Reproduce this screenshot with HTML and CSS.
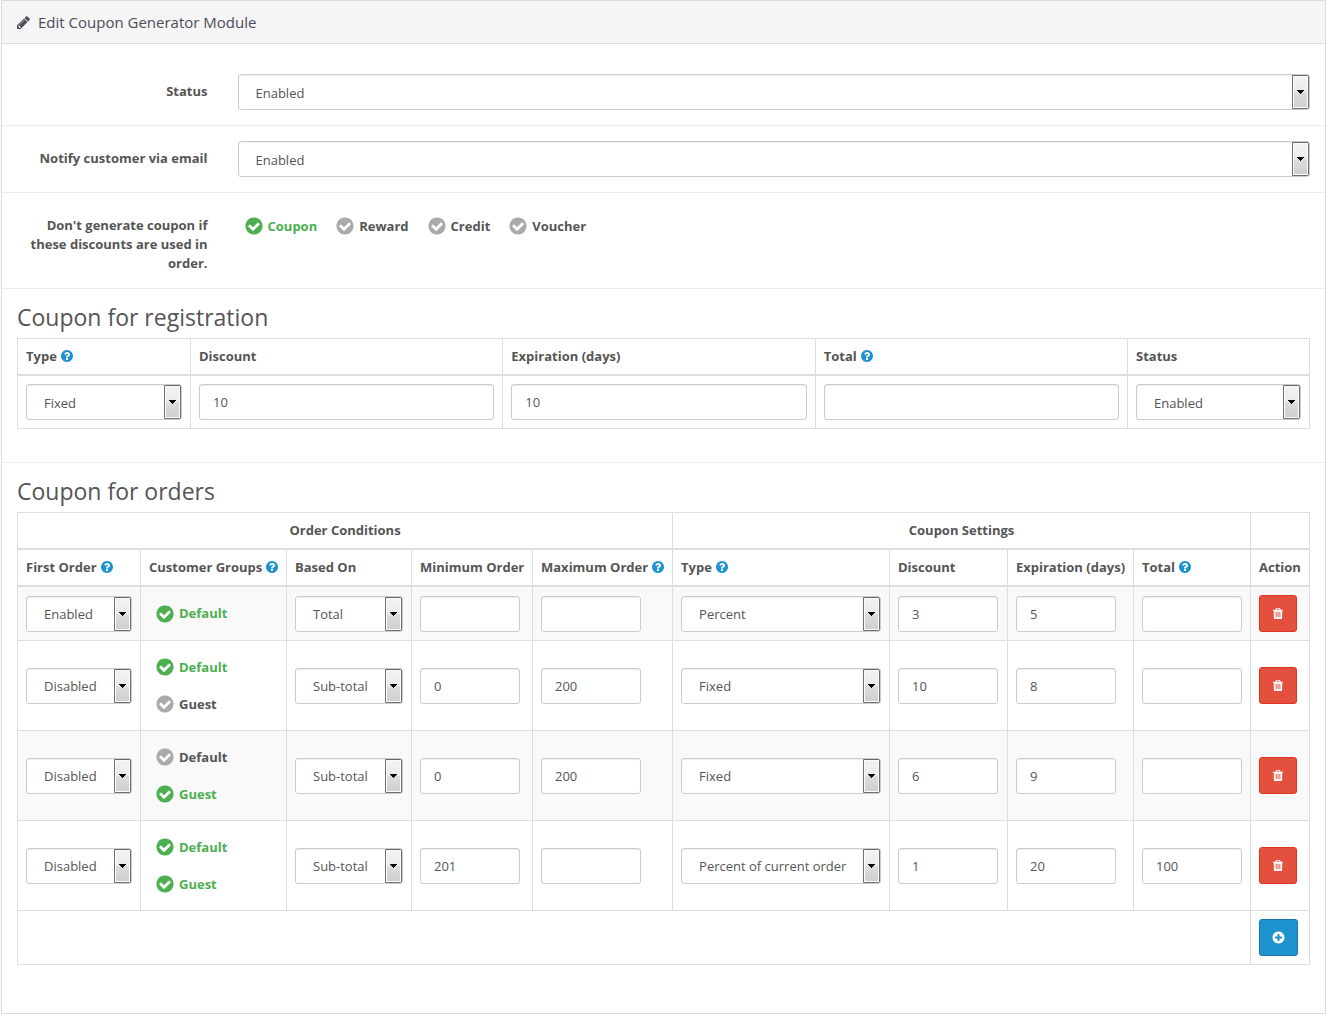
FILE: index.html
```html
<!DOCTYPE html>
<html lang="en">
<head>
<meta charset="utf-8">
<meta name="viewport" content="width=device-width, initial-scale=1">
<title>Edit Coupon Generator Module</title>
<link rel="stylesheet" href="styles.css">
</head>
<body>
<svg class="sprite" aria-hidden="true">
  <symbol id="i-pencil" viewBox="128 128 1536 1536"><path d="M491 1536l91-91-235-235-91 91v107h128v128h107zm523-928q0-22-22-22-10 0-17 7l-542 542q-7 7-7 17 0 22 22 22 10 0 17-7l542-542q7-7 7-17zm-54-192l416 416-832 832h-416v-416zm683 96q0 53-37 90l-166 166-416-416 166-165q36-38 90-38 53 0 91 38l235 234q37 39 37 91z"/></symbol>
  <symbol id="i-help" viewBox="128 128 1536 1536"><path d="M1024 1376v-192q0-14-9-23t-23-9h-192q-14 0-23 9t-9 23v192q0 14 9 23t23 9h192q14 0 23-9t9-23zm256-672q0-88-55.5-163t-138.5-116-170-41q-243 0-371 213-15 24 8 42l132 100q7 6 19 6 16 0 25-12 53-68 86-92 34-24 86-24 48 0 85.5 26t37.5 59q0 38-20 61t-68 45q-63 28-115.5 86.5t-52.5 125.5v36q0 14 9 23t23 9h192q14 0 23-9t9-23q0-19 21.5-49.5t54.5-49.5q32-18 49-28.5t46-35 44.5-48 28-60.5 12.5-81zm384 192q0 209-103 385.5t-279.5 279.5-385.5 103-385.5-103-279.5-279.5-103-385.5 103-385.5 279.5-279.5 385.5-103 385.5 103 279.5 279.5 103 385.5z"/></symbol>
  <symbol id="i-plus" viewBox="70 70 1652 1652"><path d="M1344 960v-128q0-26-19-45t-45-19h-256v-256q0-26-19-45t-45-19h-128q-26 0-45 19t-19 45v256h-256q-26 0-45 19t-19 45v128q0 26 19 45t45 19h256v256q0 26 19 45t45 19h128q26 0 45-19t19-45v-256h256q26 0 45-19t19-45zm320-64q0 209-103 385.5t-279.5 279.5-385.5 103-385.5-103-279.5-279.5-103-385.5 103-385.5 279.5-279.5 385.5-103 385.5 103 279.5 279.5 103 385.5z"/></symbol>
  <symbol id="i-trash" viewBox="69 0 1654 1792"><path d="M704 1376v-704q0-14-9-23t-23-9h-64q-14 0-23 9t-9 23v704q0 14 9 23t23 9h64q14 0 23-9t9-23zm256 0v-704q0-14-9-23t-23-9h-64q-14 0-23 9t-9 23v704q0 14 9 23t23 9h64q14 0 23-9t9-23zm256 0v-704q0-14-9-23t-23-9h-64q-14 0-23 9t-9 23v704q0 14 9 23t23 9h64q14 0 23-9t9-23zm-544-992h448l-48-117q-7-9-17-11h-317q-10 2-17 11zm928 32v64q0 14-9 23t-23 9h-96v948q0 83-47 143.5t-113 60.5h-832q-66 0-113-58.5t-47-141.5v-952h-96q-14 0-23-9t-9-23v-64q0-14 9-23t23-9h309l70-167q15-37 54-63t79-26h320q40 0 79 26t54 63l70 167h309q14 0 23 9t9 23z"/></symbol>
</svg>

<main class="panel">
  <header class="panel-heading">
    <svg class="icon-pencil" aria-hidden="true"><use href="#i-pencil"/></svg>
    <h1 class="panel-title">Edit Coupon Generator Module</h1>
  </header>
  <form class="panel-body">
    <div class="form-group">
      <label class="control-label" for="status">Status</label>
      <div class="field"><select class="control select" id="status"><option>Enabled</option><option>Disabled</option></select></div>
    </div>
    <div class="form-group">
      <label class="control-label" for="notify">Notify customer via email</label>
      <div class="field"><select class="control select" id="notify"><option>Enabled</option><option>Disabled</option></select></div>
    </div>
    <div class="form-group" role="group" aria-labelledby="skip-label">
      <span class="control-label" id="skip-label">Don't generate coupon if these discounts are used in order.</span>
      <div class="field checks">
        <label class="check"><input type="checkbox" checked>Coupon</label>
        <label class="check"><input type="checkbox">Reward</label>
        <label class="check"><input type="checkbox">Credit</label>
        <label class="check"><input type="checkbox">Voucher</label>
      </div>
    </div>

    <section class="section">
      <h2 class="section-title">Coupon for registration</h2>
      <table class="table">
        <colgroup><col class="w-reg-type"><col><col><col><col class="w-reg-status"></colgroup>
        <thead>
          <tr>
            <th><label for="reg-type">Type</label><svg class="help" aria-hidden="true"><use href="#i-help"/></svg></th>
            <th><label for="reg-discount">Discount</label></th>
            <th><label for="reg-days">Expiration (days)</label></th>
            <th><label for="reg-total">Total</label><svg class="help" aria-hidden="true"><use href="#i-help"/></svg></th>
            <th><label for="reg-status">Status</label></th>
          </tr>
        </thead>
        <tbody>
          <tr class="plain">
            <td><select class="control select" id="reg-type"><option>Fixed</option><option>Percent</option></select></td>
            <td><input class="control" type="text" id="reg-discount" value="10"></td>
            <td><input class="control" type="text" id="reg-days" value="10"></td>
            <td><input class="control" type="text" id="reg-total"></td>
            <td><select class="control select" id="reg-status"><option>Enabled</option><option>Disabled</option></select></td>
          </tr>
        </tbody>
      </table>
    </section>

    <section class="section">
      <h2 class="section-title">Coupon for orders</h2>
      <table class="table">
        <colgroup><col class="w-first"><col class="w-groups"><col class="w-based"><col class="w-min"><col class="w-max"><col><col class="w-discount"><col class="w-days"><col class="w-total"><col class="w-action"></colgroup>
        <thead>
          <tr>
            <th class="center" colspan="5" scope="colgroup">Order Conditions</th>
            <th class="center" colspan="4" scope="colgroup">Coupon Settings</th>
            <td></td>
          </tr>
          <tr>
            <th scope="col">First Order<svg class="help" aria-hidden="true"><use href="#i-help"/></svg></th>
            <th scope="col">Customer Groups<svg class="help" aria-hidden="true"><use href="#i-help"/></svg></th>
            <th scope="col">Based On</th>
            <th scope="col">Minimum Order</th>
            <th scope="col">Maximum Order<svg class="help" aria-hidden="true"><use href="#i-help"/></svg></th>
            <th scope="col">Type<svg class="help" aria-hidden="true"><use href="#i-help"/></svg></th>
            <th scope="col">Discount</th>
            <th scope="col">Expiration (days)</th>
            <th scope="col">Total<svg class="help" aria-hidden="true"><use href="#i-help"/></svg></th>
            <th scope="col">Action</th>
          </tr>
        </thead>
        <tbody>
          <tr>
            <td><select class="control select" aria-label="First Order"><option>Enabled</option><option>Disabled</option></select></td>
            <td><div class="check-list"><label class="check"><input type="checkbox" checked>Default</label></div></td>
            <td><select class="control select" aria-label="Based On"><option>Total</option><option>Sub-total</option></select></td>
            <td><input class="control short" type="text" aria-label="Minimum Order"></td>
            <td><input class="control short" type="text" aria-label="Maximum Order"></td>
            <td><select class="control select" aria-label="Type"><option>Percent</option><option>Fixed</option></select></td>
            <td><input class="control short" type="text" aria-label="Discount" value="3"></td>
            <td><input class="control short" type="text" aria-label="Expiration (days)" value="5"></td>
            <td><input class="control short" type="text" aria-label="Total"></td>
            <td><button class="btn btn-danger" type="button" aria-label="Remove"><svg class="icon-trash" aria-hidden="true"><use href="#i-trash"/></svg></button></td>
          </tr>
          <tr>
            <td><select class="control select" aria-label="First Order"><option>Disabled</option><option>Enabled</option></select></td>
            <td><div class="check-list"><label class="check"><input type="checkbox" checked>Default</label><label class="check"><input type="checkbox">Guest</label></div></td>
            <td><select class="control select" aria-label="Based On"><option>Sub-total</option><option>Total</option></select></td>
            <td><input class="control short" type="text" aria-label="Minimum Order" value="0"></td>
            <td><input class="control short" type="text" aria-label="Maximum Order" value="200"></td>
            <td><select class="control select" aria-label="Type"><option>Fixed</option><option>Percent</option></select></td>
            <td><input class="control short" type="text" aria-label="Discount" value="10"></td>
            <td><input class="control short" type="text" aria-label="Expiration (days)" value="8"></td>
            <td><input class="control short" type="text" aria-label="Total"></td>
            <td><button class="btn btn-danger" type="button" aria-label="Remove"><svg class="icon-trash" aria-hidden="true"><use href="#i-trash"/></svg></button></td>
          </tr>
          <tr>
            <td><select class="control select" aria-label="First Order"><option>Disabled</option><option>Enabled</option></select></td>
            <td><div class="check-list"><label class="check"><input type="checkbox">Default</label><label class="check"><input type="checkbox" checked>Guest</label></div></td>
            <td><select class="control select" aria-label="Based On"><option>Sub-total</option><option>Total</option></select></td>
            <td><input class="control short" type="text" aria-label="Minimum Order" value="0"></td>
            <td><input class="control short" type="text" aria-label="Maximum Order" value="200"></td>
            <td><select class="control select" aria-label="Type"><option>Fixed</option><option>Percent</option></select></td>
            <td><input class="control short" type="text" aria-label="Discount" value="6"></td>
            <td><input class="control short" type="text" aria-label="Expiration (days)" value="9"></td>
            <td><input class="control short" type="text" aria-label="Total"></td>
            <td><button class="btn btn-danger" type="button" aria-label="Remove"><svg class="icon-trash" aria-hidden="true"><use href="#i-trash"/></svg></button></td>
          </tr>
          <tr>
            <td><select class="control select" aria-label="First Order"><option>Disabled</option><option>Enabled</option></select></td>
            <td><div class="check-list"><label class="check"><input type="checkbox" checked>Default</label><label class="check"><input type="checkbox" checked>Guest</label></div></td>
            <td><select class="control select" aria-label="Based On"><option>Sub-total</option><option>Total</option></select></td>
            <td><input class="control short" type="text" aria-label="Minimum Order" value="201"></td>
            <td><input class="control short" type="text" aria-label="Maximum Order"></td>
            <td><select class="control select" aria-label="Type"><option>Percent of current order</option><option>Fixed</option></select></td>
            <td><input class="control short" type="text" aria-label="Discount" value="1"></td>
            <td><input class="control short" type="text" aria-label="Expiration (days)" value="20"></td>
            <td><input class="control short" type="text" aria-label="Total" value="100"></td>
            <td><button class="btn btn-danger" type="button" aria-label="Remove"><svg class="icon-trash" aria-hidden="true"><use href="#i-trash"/></svg></button></td>
          </tr>
        </tbody>
        <tfoot>
          <tr>
            <td colspan="9"></td>
            <td><button class="btn btn-primary" type="button" aria-label="Add"><svg class="icon-plus" aria-hidden="true"><use href="#i-plus"/></svg></button></td>
          </tr>
        </tfoot>
      </table>
    </section>
  </form>
</main>
</body>
</html>
```
FILE: styles.css
```css
*,
*::before,
*::after {
  box-sizing: border-box;
}

body {
  margin: 0;
  background: #fff;
  color: #555;
  font: 13px/19px "Open Sans", "Noto Sans", sans-serif;
}

svg {
  fill: currentColor;
}

.sprite {
  position: absolute;
  width: 0;
  height: 0;
}

/* Panel */
.panel {
  margin: 0 1px;
  border: 1px solid #dcdcdc;
  box-shadow: 0 1px 1px rgba(0, 0, 0, 0.05);
}

.panel-heading {
  display: flex;
  align-items: center;
  gap: 8px;
  padding: 10px 15px;
  border-bottom: 1px solid #dcdcdc;
  background: #f5f5f5;
  color: #4c4d5a;
}

.panel-title {
  margin: 0;
  font-size: 15px;
  font-weight: 400;
  line-height: 22px;
}

.icon-pencil {
  width: 13px;
  height: 13px;
}

.panel-body {
  padding: 15px 0;
}

/* Form rows */
.form-group {
  display: grid;
  grid-template-columns: 1fr 5fr;
  padding: 15px 0;
}

.form-group + .form-group,
.section {
  border-top: 1px solid #ededed;
}

.control-label {
  padding: 8px 15px 0;
  font-weight: 700;
  text-align: right;
}

.field {
  padding: 0 15px;
}

.control {
  display: block;
  width: 100%;
  height: 36px;
  margin: 0;
  padding: 0 13px;
  border: 1px solid #ccc;
  border-radius: 3px;
  background-color: #fff;
  box-shadow: inset 0 1px 1px rgba(0, 0, 0, 0.075);
  color: #555;
  font: inherit;
}

.short {
  width: 100px;
}

.select {
  padding: 2px 18px 0 17px;
  appearance: none;
  background-image: url("data:image/svg+xml,%3Csvg xmlns='http://www.w3.org/2000/svg' width='17' height='34'%3E%3Cdefs%3E%3ClinearGradient id='g' x2='0' y2='1'%3E%3Cstop stop-color='%23f2f2f2'/%3E%3Cstop offset='.5' stop-color='%23ebebeb'/%3E%3Cstop offset='.5' stop-color='%23ddd'/%3E%3Cstop offset='1' stop-color='%23cfcfcf'/%3E%3C/linearGradient%3E%3C/defs%3E%3Crect width='17' height='34' rx='1' fill='%23707070'/%3E%3Crect x='1' y='1' width='15' height='32' fill='%23fcfcfc'/%3E%3Crect x='2' y='2' width='13' height='30' fill='url(%23g)'/%3E%3Cpath d='M5 15h7v1h-1v1h-1v1H9v1H8v-1H7v-1H6v-1H5z' fill='%23000'/%3E%3C/svg%3E");
  background-position: right center;
  background-repeat: no-repeat;
}

/* Tick boxes */
.checks {
  display: flex;
  flex-wrap: wrap;
  gap: 0 12px;
}

.check-list {
  display: grid;
  gap: 1px;
}

.check {
  display: flex;
  align-items: center;
  gap: 4px;
  height: 36px;
  padding-left: 6px;
  font-weight: 700;
}

.check input {
  width: 20px;
  height: 20px;
  margin: 0;
  appearance: none;
  background: url("data:image/svg+xml,%3Csvg xmlns='http://www.w3.org/2000/svg' viewBox='0 0 1792 1792'%3E%3Cpath fill='%23aaa' d='M1412 734q0-28-18-46l-91-90q-19-19-45-19t-45 19l-408 407-226-226q-19-19-45-19t-45 19l-91 90q-18 18-18 46 0 27 18 45l362 362q19 19 45 19 27 0 46-19l543-543q18-18 18-45zm252 162q0 209-103 385.5t-279.5 279.5-385.5 103-385.5-103-279.5-279.5-103-385.5 103-385.5 279.5-279.5 385.5-103 385.5 103 279.5 279.5 103 385.5z'/%3E%3C/svg%3E") center / 20px no-repeat;
}

.check input:checked {
  background-image: url("data:image/svg+xml,%3Csvg xmlns='http://www.w3.org/2000/svg' viewBox='0 0 1792 1792'%3E%3Cpath fill='%234caf50' d='M1412 734q0-28-18-46l-91-90q-19-19-45-19t-45 19l-408 407-226-226q-19-19-45-19t-45 19l-91 90q-18 18-18 46 0 27 18 45l362 362q19 19 45 19 27 0 46-19l543-543q18-18 18-45zm252 162q0 209-103 385.5t-279.5 279.5-385.5 103-385.5-103-279.5-279.5-103-385.5 103-385.5 279.5-279.5 385.5-103 385.5 103 279.5 279.5 103 385.5z'/%3E%3C/svg%3E");
}

.check:has(:checked) {
  color: #4caf50;
}

/* Sections and tables */
.section {
  padding: 15px;
}

.section-title {
  margin: 0 0 8px;
  font-size: 23px;
  font-weight: 400;
  line-height: 26px;
}

.table {
  width: 100%;
  margin-bottom: 18px;
  border-collapse: collapse;
  table-layout: fixed;
}

.table th,
.table td {
  padding: 8px;
  border: 1px solid #ddd;
  text-align: left;
  vertical-align: middle;
}

.table thead th,
.table thead td {
  border-bottom-width: 2px;
  white-space: nowrap;
}

.table .center {
  text-align: center;
}

.table tbody tr:nth-child(odd):not(.plain) {
  background: #f9f9f9;
}

.w-reg-type { width: 173px; }
.w-reg-status { width: 182px; }
.w-first { width: 123px; }
.w-groups { width: 146px; }
.w-based { width: 125px; }
.w-min { width: 121px; }
.w-max { width: 140px; }
.w-discount { width: 118px; }
.w-days { width: 126px; }
.w-total { width: 117px; }
.w-action { width: 59px; }

.help {
  width: 12px;
  height: 12px;
  margin-left: 4px;
  color: #1e91cf;
  vertical-align: -1px;
}

/* Buttons */
.btn {
  display: flex;
  align-items: center;
  height: 37px;
  padding: 0 12px;
  border: 1px solid;
  border-radius: 3px;
  color: #fff;
}

.btn-danger {
  border-color: #dd3321;
  background: #e4503e;
}

.btn-primary {
  border-color: #1978ab;
  background: #1e91cf;
}

.icon-trash {
  width: 12px;
  height: 13px;
}

.icon-plus {
  width: 13px;
  height: 13px;
}
```
